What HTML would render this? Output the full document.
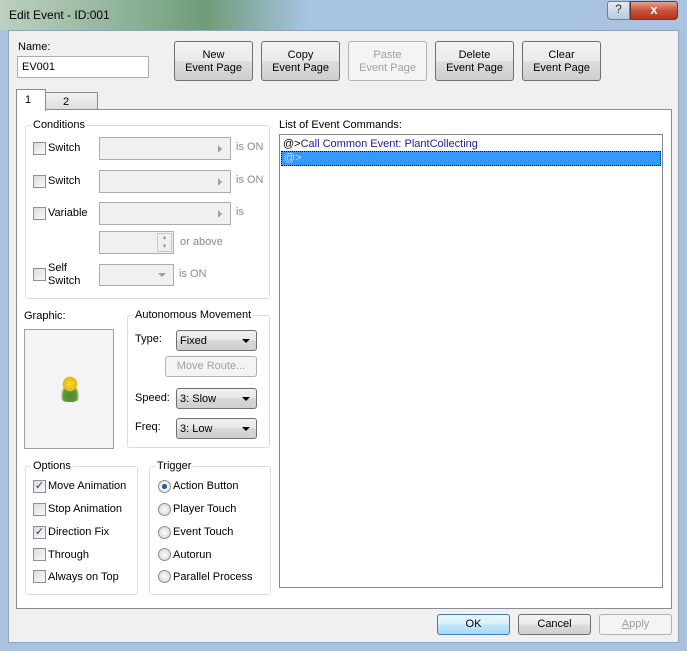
<!DOCTYPE html><html><head><style>
*{box-sizing:border-box}
body{margin:0;width:687px;height:651px;overflow:hidden;font-family:"Liberation Sans",sans-serif;font-size:11px;color:#000;position:relative;background:#a9c2de}
.a{position:absolute}
.btn{position:absolute;border:1px solid #707070;border-radius:3px;background:linear-gradient(#f2f2f2 0,#ebebeb 50%,#dddddd 51%,#cfcfcf 100%);text-align:center;line-height:13px;font-size:11px}
.dis{color:#a0a0a0;border-color:#adb2b5;background:#f4f4f4}
.grp{position:absolute;border:1px solid #d5dfe5;border-radius:3px}
.gl{position:absolute;background:#f0f0f0;padding:0 2px;top:-8px;left:5px;line-height:14px}
.wp .gl{background:#fff}
.cb{position:absolute;width:13px;height:13px;border:1px solid #8f8f8f;background:linear-gradient(135deg,#dcdcdc,#fafafa)}
.rb{position:absolute;width:13px;height:13px;border:1px solid #8f8f8f;border-radius:50%;background:radial-gradient(#fafafa,#d4d4d4)}
.cmb{position:absolute;border:1px solid #acacac;background:#f0f0f0}
.cmb.ar:after{content:"";position:absolute;right:8px;top:7px;border:4px solid transparent;border-left:4px solid #a0a0a0;border-right:0}
.dd{position:absolute;border:1px solid #707070;border-radius:3px;background:linear-gradient(#f2f2f2,#e6e6e6 50%,#d6d6d6 51%,#d0d0d0);padding:4px 0 0 3px;font-size:11px;line-height:12px}
.dd:after{content:"";position:absolute;right:6px;top:8px;border:4px solid transparent;border-top:4px solid #000;border-bottom:0}
.t{position:absolute;line-height:13px}
.g{color:#8a8a8a}
</style></head><body>
<div class="a" style="left:0;top:0;width:687px;height:30px;background:linear-gradient(90deg,#bcd0c0 0,#8fb39a 18%,#6f9c78 30%,#a8c4e2 45%,#a9c3e0 100%)"></div>
<div class="t" style="left:9px;top:9px;font-size:12px">Edit Event - ID:001</div>
<div class="a" style="left:607px;top:1px;width:23px;height:19px;border:1px solid #6d7f98;border-radius:3px 0 0 4px;background:linear-gradient(#e4ecf6,#b8c9df);text-align:center;font-size:12px;color:#333">?</div>
<div class="a" style="left:630px;top:1px;width:48px;height:19px;border:1px solid #6e3630;border-radius:0 3px 4px 0;background:linear-gradient(#e8a593,#c7513a 50%,#b8331c);color:#fff;text-align:center;font-weight:bold;font-size:13px">x</div>
<div class="a" style="left:8px;top:30px;width:671px;height:613px;background:#f0f0f0;border:1px solid #8ea4bf"></div>
<div class="t" style="left:18px;top:41px">Name:</div>
<div class="a" style="left:17px;top:56px;width:132px;height:22px;border:1px solid #abadb3;background:#fff;padding:4px 0 0 4px">EV001</div>
<div class="btn" style="left:174px;top:41px;width:79px;height:40px;padding-top:7px">New<br>Event Page</div>
<div class="btn" style="left:261px;top:41px;width:79px;height:40px;padding-top:7px">Copy<br>Event Page</div>
<div class="btn dis" style="left:348px;top:41px;width:79px;height:40px;padding-top:7px">Paste<br>Event Page</div>
<div class="btn" style="left:435px;top:41px;width:79px;height:40px;padding-top:7px">Delete<br>Event Page</div>
<div class="btn" style="left:522px;top:41px;width:79px;height:40px;padding-top:7px">Clear<br>Event Page</div>
<div class="a" style="left:45px;top:92px;width:53px;height:18px;border:1px solid #898c95;border-bottom:0;background:linear-gradient(#f2f2f2,#dcdcdc);padding:3px 0 0 17px">2</div>
<div class="a wp" style="left:16px;top:109px;width:656px;height:500px;border:1px solid #898c95;background:#fff"></div>
<div class="a" style="left:16px;top:89px;width:30px;height:22px;border:1px solid #898c95;border-bottom:0;background:#fff;padding:4px 0 0 8px">1</div>
<div class="wp">
<div class="grp" style="left:25px;top:125px;width:245px;height:174px"><span class="gl">Conditions</span></div>
<div class="cb" style="left:33px;top:142px"></div><div class="t" style="left:48px;top:142px">Switch</div>
<div class="cmb ar" style="left:99px;top:137px;width:132px;height:23px"></div><div class="t g" style="left:236px;top:141px">is ON</div>
<div class="cb" style="left:33px;top:175px"></div><div class="t" style="left:48px;top:175px">Switch</div>
<div class="cmb ar" style="left:99px;top:170px;width:132px;height:23px"></div><div class="t g" style="left:236px;top:174px">is ON</div>
<div class="cb" style="left:33px;top:207px"></div><div class="t" style="left:48px;top:207px">Variable</div>
<div class="cmb ar" style="left:99px;top:202px;width:132px;height:23px"></div><div class="t g" style="left:236px;top:206px">is</div>
<div class="cmb" style="left:99px;top:231px;width:75px;height:23px"><div class="a" style="left:57px;top:1px;width:15px;height:19px;border:1px solid #c8c8c8;font-size:6px;color:#999;text-align:center;line-height:9px">▲<br>▼</div></div><div class="t g" style="left:180px;top:236px">or above</div>
<div class="cb" style="left:33px;top:268px"></div><div class="t" style="left:48px;top:262px">Self<br>Switch</div>
<div class="cmb" style="left:99px;top:264px;width:75px;height:22px"><div class="a" style="left:58px;top:8px;border:4px solid transparent;border-top:4px solid #a0a0a0;border-bottom:0"></div></div><div class="t g" style="left:179px;top:268px">is ON</div>
<div class="t" style="left:24px;top:310px">Graphic:</div>
<div class="a" style="left:24px;top:329px;width:90px;height:120px;border:1px solid #a0a0a0;background:#f4f4f4"></div>
<div class="a" style="left:58px;top:378px;width:24px;height:24px;border-radius:40%;background:radial-gradient(ellipse at 50% 75%,#4f8a30 0,#5f9a3a 40%,transparent 55%)"></div>
<div class="a" style="left:61px;top:375px;width:18px;height:18px;border-radius:50%;background:radial-gradient(circle,#f6dc30 0,#e3b814 55%,transparent 60%)"></div>
<div class="grp" style="left:127px;top:315px;width:143px;height:133px"><span class="gl">Autonomous Movement</span></div>
<div class="t" style="left:135px;top:333px">Type:</div><div class="dd" style="left:176px;top:330px;width:81px;height:21px">Fixed</div>
<div class="btn dis" style="left:165px;top:356px;width:92px;height:21px;padding-top:3px">Move Route...</div>
<div class="t" style="left:135px;top:392px">Speed:</div><div class="dd" style="left:176px;top:388px;width:81px;height:21px">3: Slow</div>
<div class="t" style="left:135px;top:421px">Freq:</div><div class="dd" style="left:176px;top:418px;width:81px;height:21px">3: Low</div>
<div class="grp" style="left:25px;top:466px;width:113px;height:129px"><span class="gl">Options</span></div>
<div class="cb" style="left:33px;top:480px;font-size:11px;line-height:10px;color:#2a3a80;text-align:center">✓</div><div class="t" style="left:48px;top:480px">Move Animation</div>
<div class="cb" style="left:33px;top:503px"></div><div class="t" style="left:48px;top:503px">Stop Animation</div>
<div class="cb" style="left:33px;top:526px;font-size:11px;line-height:10px;color:#2a3a80;text-align:center">✓</div><div class="t" style="left:48px;top:526px">Direction Fix</div>
<div class="cb" style="left:33px;top:548px"></div><div class="t" style="left:48px;top:549px">Through</div>
<div class="cb" style="left:33px;top:570px"></div><div class="t" style="left:48px;top:571px">Always on Top</div>
<div class="grp" style="left:149px;top:466px;width:122px;height:129px"><span class="gl">Trigger</span></div>
<div class="rb" style="left:158px;top:480px;background:radial-gradient(#2b6ec4 0,#1b4f99 30%,#fafafa 35%,#d4d4d4)"></div><div class="t" style="left:173px;top:480px">Action Button</div>
<div class="rb" style="left:158px;top:503px"></div><div class="t" style="left:173px;top:503px">Player Touch</div>
<div class="rb" style="left:158px;top:526px"></div><div class="t" style="left:173px;top:526px">Event Touch</div>
<div class="rb" style="left:158px;top:548px"></div><div class="t" style="left:173px;top:549px">Autorun</div>
<div class="rb" style="left:158px;top:570px"></div><div class="t" style="left:173px;top:571px">Parallel Process</div>
<div class="t" style="left:279px;top:119px">List of Event Commands:</div>
<div class="a" style="left:279px;top:134px;width:384px;height:454px;border:1px solid #828790;background:#fff"></div>
<div class="t" style="left:283px;top:138px"><span>@&gt;</span><span style="color:#1c1ca0">Call Common Event: PlantCollecting</span></div>
<div class="a" style="left:281px;top:151px;width:380px;height:15px;background:#3399ff;border:1px dotted #000;color:#cde;padding:0 0 0 2px;line-height:13px">@&gt;</div>
</div>
<div class="btn" style="left:437px;top:614px;width:73px;height:21px;padding-top:3px;border-color:#3c7fb1;background:linear-gradient(#eaf6fd,#d9f0fc 50%,#bee6fd 51%,#a7d9f5)">OK</div>
<div class="btn" style="left:518px;top:614px;width:73px;height:21px;padding-top:3px">Cancel</div>
<div class="btn dis" style="left:599px;top:614px;width:73px;height:21px;padding-top:3px"><u>A</u>pply</div>
</body></html>
